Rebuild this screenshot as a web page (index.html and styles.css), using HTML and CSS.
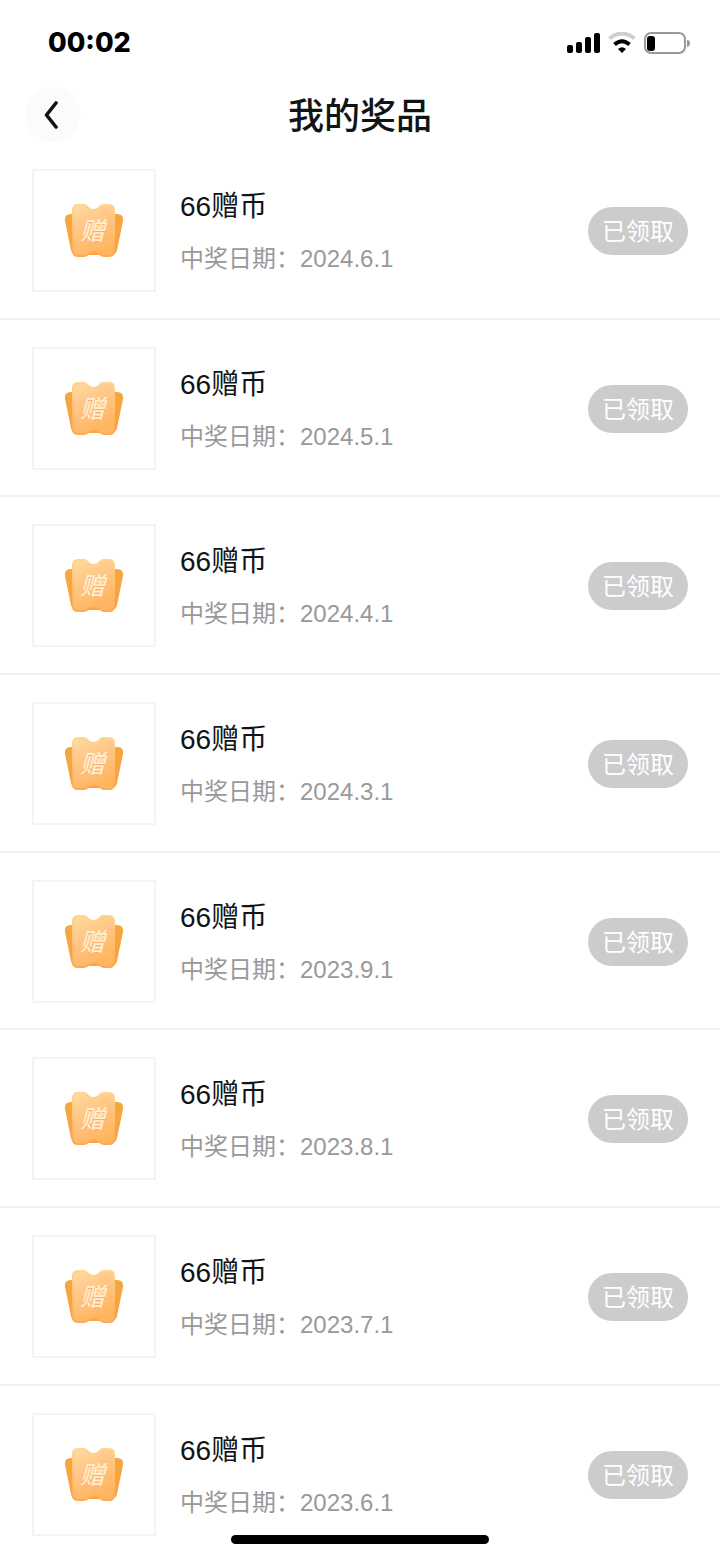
FILE: index.html
```html
<!DOCTYPE html>
<html lang="zh-CN">
<head>
<meta charset="utf-8">
<meta name="viewport" content="width=device-width, initial-scale=1">
<title>我的奖品</title>
<link rel="stylesheet" href="styles.css">
</head>
<body>
<svg class="defs" width="0" height="0" aria-hidden="true">
  <defs>
    <linearGradient id="back" x1="0" y1="0" x2="0" y2="1"><stop offset="0" stop-color="#f3a83f"/><stop offset="1" stop-color="#ff9f40"/></linearGradient>
    <linearGradient id="front" x1="0" y1="0" x2="0.4" y2="1"><stop offset="0" stop-color="#ffdba0"/><stop offset="0.5" stop-color="#ffc584"/><stop offset="1" stop-color="#ffb660"/></linearGradient>
    <linearGradient id="rim" x1="0" y1="0" x2="0" y2="1"><stop offset="0" stop-color="#ffd590"/><stop offset="1" stop-color="#ffa950"/></linearGradient>
    <symbol id="ticket" viewBox="0 0 60 54">
      <path d="M7 10H53Q60 10 59 17L53 46Q52 51 47 51H13Q8 51 7 46L1 17Q0 10 7 10Z" fill="url(#back)"/>
      <path d="M14 1H20C24 1 23 6 29.500 6S35 1 39 1H45Q50 1 50 6V47Q50 52 45 52H40C36 52 36 48 30 48S24 52 20 52H14Q9 52 9 47V6Q9 1 14 1Z" fill="url(#front)" stroke="url(#rim)" stroke-width="2"/>
      <text class="ticket-shade" x="16" y="37">赠</text>
      <text class="ticket-text" x="16" y="36">赠</text>
    </symbol>
  </defs>
</svg>
<header class="header">
  <div class="status-bar">
    <time class="clock">00:02</time>
    <div class="indicators">
      <svg width="33" height="22" viewBox="0 0 33 22" aria-label="信号">
        <rect x="0" y="13" width="6" height="8" rx="2"/><rect x="9" y="10" width="6" height="11" rx="2"/><rect x="18" y="5" width="6" height="16" rx="2"/><rect x="27" y="1" width="6" height="20" rx="2"/>
      </svg>
      <svg width="28" height="22" viewBox="0 0 28 22" aria-label="无线网络">
        <path d="M1.500 6.500Q14-3.500 26.500 6.500" fill="none" stroke="#cfcfcf" stroke-width="4"/>
        <path d="M6.500 12.500Q14 6 21.500 12.500" fill="none" stroke="#000" stroke-width="4"/>
        <path d="M10 17Q14 13.500 18 17L14 21Z"/>
      </svg>
      <svg width="46" height="22" viewBox="0 0 46 22" aria-label="电量">
        <rect x="1" y="1" width="40" height="20" rx="6" fill="none" stroke="#989898" stroke-width="2"/>
        <rect x="3" y="4" width="8" height="15" rx="3"/>
        <path d="M43 8Q46 8 46 11T43 15Z" fill="#989898"/>
      </svg>
    </div>
  </div>
  <nav class="nav">
    <button class="back" type="button" aria-label="返回">
      <svg width="14" height="30" viewBox="0 0 14 30"><path d="M12 3L2.500 15L12 27" fill="none" stroke="#111416" stroke-width="3.600" stroke-linecap="round" stroke-linejoin="round"/></svg>
    </button>
    <h1 class="title">我的奖品</h1>
  </nav>
</header>
<main>
  <ul class="prizes">
    <li class="prize"><div class="thumb"><svg class="ticket"><use href="#ticket"/></svg></div><div class="info"><h2 class="name">66赠币</h2><p class="date">中奖日期：2024.6.1</p></div><button class="claimed" type="button" disabled>已领取</button></li>
    <li class="prize"><div class="thumb"><svg class="ticket"><use href="#ticket"/></svg></div><div class="info"><h2 class="name">66赠币</h2><p class="date">中奖日期：2024.5.1</p></div><button class="claimed" type="button" disabled>已领取</button></li>
    <li class="prize"><div class="thumb"><svg class="ticket"><use href="#ticket"/></svg></div><div class="info"><h2 class="name">66赠币</h2><p class="date">中奖日期：2024.4.1</p></div><button class="claimed" type="button" disabled>已领取</button></li>
    <li class="prize"><div class="thumb"><svg class="ticket"><use href="#ticket"/></svg></div><div class="info"><h2 class="name">66赠币</h2><p class="date">中奖日期：2024.3.1</p></div><button class="claimed" type="button" disabled>已领取</button></li>
    <li class="prize"><div class="thumb"><svg class="ticket"><use href="#ticket"/></svg></div><div class="info"><h2 class="name">66赠币</h2><p class="date">中奖日期：2023.9.1</p></div><button class="claimed" type="button" disabled>已领取</button></li>
    <li class="prize"><div class="thumb"><svg class="ticket"><use href="#ticket"/></svg></div><div class="info"><h2 class="name">66赠币</h2><p class="date">中奖日期：2023.8.1</p></div><button class="claimed" type="button" disabled>已领取</button></li>
    <li class="prize"><div class="thumb"><svg class="ticket"><use href="#ticket"/></svg></div><div class="info"><h2 class="name">66赠币</h2><p class="date">中奖日期：2023.7.1</p></div><button class="claimed" type="button" disabled>已领取</button></li>
    <li class="prize"><div class="thumb"><svg class="ticket"><use href="#ticket"/></svg></div><div class="info"><h2 class="name">66赠币</h2><p class="date">中奖日期：2023.6.1</p></div><button class="claimed" type="button" disabled>已领取</button></li>
  </ul>
</main>
<div class="home-bar"></div>
</body>
</html>
```

FILE: styles.css
```css
* { box-sizing: border-box; }
body {
  margin: 0;
  background: #fff;
  color: #111416;
  font-family: "Liberation Sans", "Noto Sans CJK SC", sans-serif;
}
.defs { position: absolute; }
.status-bar {
  display: flex;
  justify-content: space-between;
  align-items: center;
  height: 87px;
  padding: 0 30px 1px 48px;
}
.clock {
  color: #000;
  font: 800 27px/34px Inter, sans-serif;
}
.indicators {
  display: flex;
  gap: 8px;
}
.nav {
  display: grid;
  grid-template-columns: 55px 1fr 55px;
  align-items: center;
  padding: 0 25px;
}
.back {
  display: flex;
  align-items: center;
  justify-content: center;
  width: 55px;
  height: 55px;
  padding: 0 4px 0 0;
  border: 0;
  border-radius: 50%;
  background: #fbfbfb;
}
.title {
  margin: 0;
  padding-bottom: 3px;
  text-align: center;
  font-size: 36px;
  line-height: 52px;
  font-weight: 500;
  font-family: "Noto Sans CJK SC", sans-serif;
}
.prizes {
  margin: 0;
  padding: 0;
  list-style: none;
}
.prize {
  display: flex;
  align-items: center;
  gap: 24px;
  padding: 27px 32px 26px;
  border-bottom: 2px solid #f1f1f1;
}
.prize:nth-child(3n + 2) { padding-bottom: 25px; }
.prize:last-child {
  padding-bottom: 23px;
  border-bottom: 0;
}
.thumb {
  display: grid;
  place-items: center;
  width: 124px;
  height: 123px;
  border: 2px solid #f4f4f4;
}
.ticket {
  width: 60px;
  height: 54px;
}
.ticket-text,
.ticket-shade {
  font: italic 500 25px "Noto Sans CJK SC", sans-serif;
}
.ticket-text { fill: #ffeecd; }
.ticket-shade { fill: #ffad70; }
.info {
  flex: 1;
  padding-top: 4px;
}
.name {
  margin: 0 0 12px;
  font-size: 28px;
  line-height: 40px;
  font-weight: 400;
}
.date {
  margin: 0;
  color: #999;
  font-size: 24px;
  line-height: 40px;
}
.claimed {
  width: 100px;
  height: 48px;
  padding: 0 0 2px;
  border: 0;
  border-radius: 24px;
  background: #ccc;
  color: #fff;
  font: 24px/46px "Noto Sans CJK SC", sans-serif;
}
.home-bar {
  position: fixed;
  bottom: 15px;
  left: 50%;
  width: 258px;
  height: 9px;
  margin-left: -129px;
  border-radius: 5px;
  background: #000;
}
```
